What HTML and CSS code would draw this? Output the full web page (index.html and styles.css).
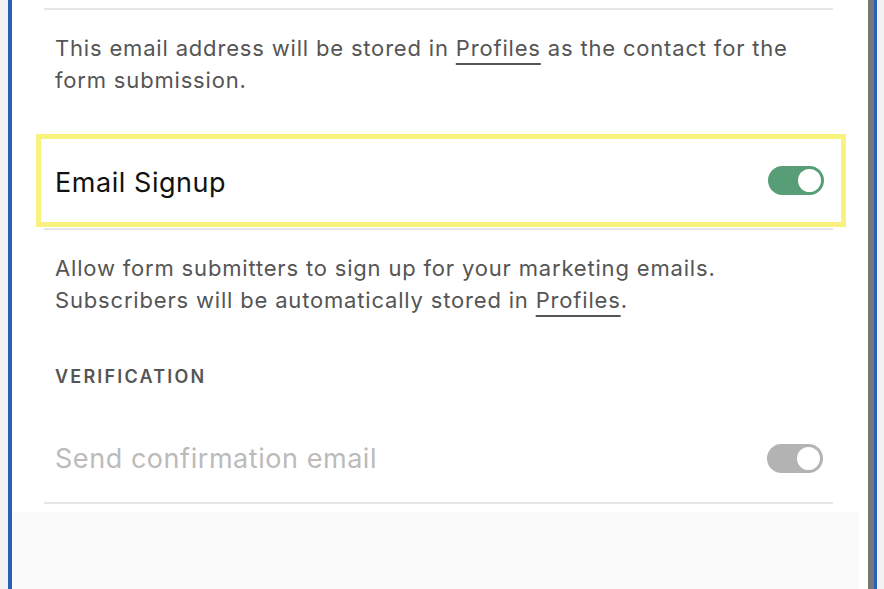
FILE: index.html
```html
<!DOCTYPE html>
<html>
<head>
<meta charset="utf-8">
<link rel="stylesheet" href="styles.css">
</head>
<body>
<div class="frame">
  <div class="panel">
    <div class="content">
      <div class="divider top"></div>
      <p class="desc">This email address will be stored in <span class="link">Profiles</span> as the contact for the form submission.</p>
      <div class="highlight">
        <div class="row">
          <span class="label">Email Signup</span>
          <span class="toggle on"><span class="knob"></span></span>
        </div>
      </div>
      <div class="divider after-hl"></div>
      <p class="desc desc2">Allow form submitters to sign up for your marketing emails. Subscribers will be automatically stored in <span class="link">Profiles</span>.</p>
      <div class="section">VERIFICATION</div>
      <div class="row plain">
        <span class="label disabled">Send confirmation email</span>
        <span class="toggle off"><span class="knob"></span></span>
      </div>
      <div class="divider"></div>
    </div>
    <div class="footer"></div>
  </div>
</div>
</body>
</html>
```
FILE: styles.css
```css
html, body {
  margin: 0;
  padding: 0;
  height: 100%;
  background: #f2f2f2;
  font-family: Inter, "Noto Sans", sans-serif;
}
.frame {
  height: 589px;
  padding-left: 8px;
  display: flex;
  overflow: hidden;
}
.panel {
  width: 856px;
  background: #fff;
  border-left: 4px solid #2b5fb4;
  border-right: 6px solid #777;
  box-shadow: 3px 0 0 #2b5fb4;
  display: flex;
  flex-direction: column;
}
.content {
  padding: 8px 35px 0 32px;
}
.divider {
  height: 2px;
  background: #e6e6e6;
}
.divider.after-hl {
  margin-top: 1px;
}
.desc {
  margin: 22px 0 0 11px;
  max-width: 770px;
  font-size: 22px;
  line-height: 32px;
  color: #555;
  letter-spacing: 0.82px;
}
.desc2 {
  margin-top: 22px;
}
.link {
  text-decoration: underline;
  text-decoration-thickness: 2px;
  text-underline-offset: 7px;
  text-decoration-color: #555;
}
.highlight {
  margin: 38px -13px 0 -8px;
  border: 5px solid #faf27f;
  padding: 0 17px 0 14px;
}
.row {
  height: 83px;
  display: flex;
  align-items: center;
  justify-content: space-between;
}
.row.plain {
  height: 87px;
  margin-top: 27px;
  padding: 0 10px 0 11px;
}
.label {
  padding-top: 4px;
  font-size: 27px;
  color: #111;
  letter-spacing: 0.55px;
}
.label.disabled {
  color: #bbb;
  padding-top: 0;
}
.toggle {
  width: 56px;
  height: 29px;
  border-radius: 15px;
  display: flex;
  align-items: center;
  justify-content: flex-end;
  padding-right: 3px;
  box-sizing: border-box;
}
.toggle.on { background: #579e76; }
.toggle.off { background: #b3b3b3; }
.knob {
  width: 23px;
  height: 23px;
  border-radius: 50%;
  background: #fff;
}
.section {
  margin: 50px 0 0 11px;
  font-size: 18px;
  line-height: 22px;
  font-weight: 600;
  letter-spacing: 2.2px;
  color: #555;
}
.footer {
  flex: 1;
  margin: 8px 10px 0 0;
  background: #fafafa;
}
```
